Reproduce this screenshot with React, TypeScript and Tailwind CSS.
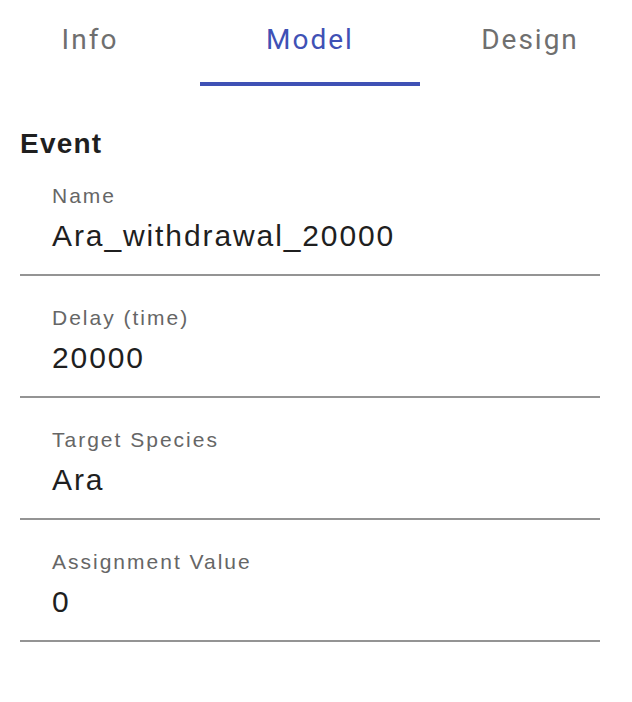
import { useState } from 'react'

const tabs = ['Info', 'Model', 'Design']

const fields = [
  { label: 'Name', value: 'Ara_withdrawal_20000' },
  { label: 'Delay (time)', value: '20000' },
  { label: 'Target Species', value: 'Ara' },
  { label: 'Assignment Value', value: '0' },
]

function Field({ label, value, first }: { label: string; value: string; first: boolean }) {
  return (
    <div className={first ? 'pt-[26px]' : 'pt-[30px]'}>
      <div className="px-[32px] text-[21px] leading-[24px] tracking-[2px] text-[#666666]">{label}</div>
      <div className="mt-[10px] px-[32px] text-[30px] leading-[36px] tracking-[1.9px] text-[#1f1f1f]">{value}</div>
      <div className="mt-[20px] h-[2px] bg-[#949494]" />
    </div>
  )
}

export default function App() {
  const [active, setActive] = useState(1)

  return (
    <div className="w-[632px] h-[702px] overflow-hidden bg-white font-['Liberation_Sans',Arial,sans-serif]">
      <div className="flex -ml-[20px]">
        {tabs.map((t, i) => (
          <button key={t} onClick={() => setActive(i)} className="w-[220px] shrink-0 flex flex-col">
            <div
              className={
                'h-[82px] pb-[3px] flex items-center justify-center font-[Roboto,sans-serif] text-[28px] leading-[32px] tracking-[2px] ' +
                (i === active ? 'text-[#3f51b5]' : 'text-[#6f6f6f]')
              }
            >
              {t}
            </div>
            <div className={i === active ? 'h-[4px] bg-[#3f51b5]' : 'h-[4px]'} />
          </button>
        ))}
      </div>

      <div className="px-[20px] w-[620px]">
        <h2 className="mt-[44px] text-[28px] leading-[28px] font-bold tracking-[1.2px] text-[#1f1f1f]">Event</h2>
        {fields.map((f, i) => (
          <Field key={f.label} label={f.label} value={f.value} first={i === 0} />
        ))}
      </div>
    </div>
  )
}
